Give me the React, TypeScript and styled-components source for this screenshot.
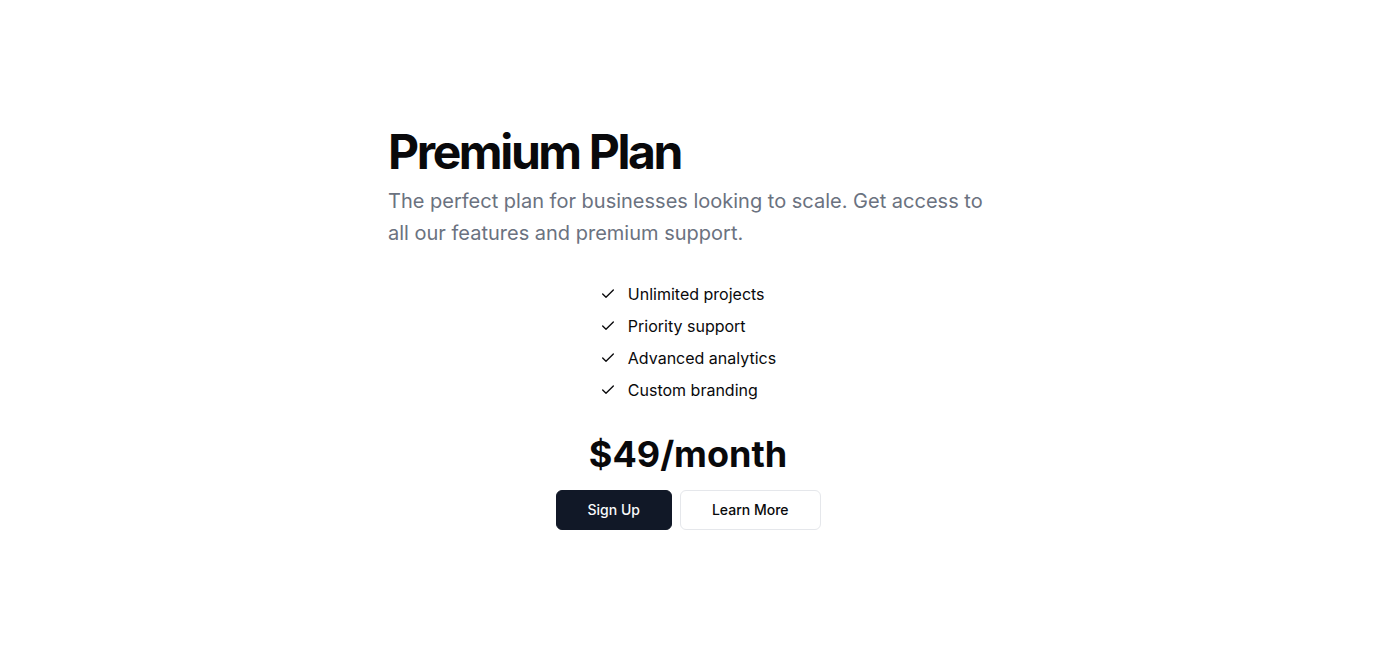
import React from "react";
import styled, { createGlobalStyle } from "styled-components";

const Global = createGlobalStyle`
  html, body { margin: 0; padding: 0; background: #ffffff; }
  body { font-family: Inter, "Noto Sans", sans-serif; color: #09090b; }
  * { box-sizing: border-box; }
`;

const Page = styled.main`
  min-height: 100vh;
  display: flex;
  align-items: center;
  justify-content: center;
`;

const Card = styled.section`
  width: 600px;
  display: flex;
  flex-direction: column;
`;

const Title = styled.h1`
  margin: 0;
  font-size: 48px;
  line-height: 48px;
  font-weight: 700;
  letter-spacing: -0.05em;
  color: #09090b;
`;

const Description = styled.p`
  margin: 9px 0 0;
  font-size: 20px;
  line-height: 32.5px;
  color: #6b7280;
`;

const Features = styled.ul`
  list-style: none;
  margin: 32px 0 0;
  padding: 0;
  align-self: center;
  display: flex;
  flex-direction: column;
  gap: 8px;
`;

const Feature = styled.li`
  display: flex;
  align-items: center;
  gap: 12px;
  font-size: 16px;
  line-height: 24px;
  white-space: nowrap;
  color: #09090b;
  svg { flex-shrink: 0; }
`;

const Price = styled.div`
  margin-top: 32px;
  text-align: center;
  font-size: 36px;
  line-height: 40px;
  font-weight: 700;
  color: #09090b;
`;

const Actions = styled.div`
  margin-top: 16px;
  display: flex;
  justify-content: center;
  gap: 8px;
`;

const Button = styled.button<{ $variant?: "primary" | "outline" }>`
  height: 40px;
  padding: 0 31px;
  border-radius: 6px;
  font-family: Inter, sans-serif;
  font-size: 14px;
  font-weight: 500;
  cursor: pointer;
  border: 1px solid ${(p) => (p.$variant === "outline" ? "#e5e7eb" : "#111827")};
  background: ${(p) => (p.$variant === "outline" ? "#ffffff" : "#111827")};
  color: ${(p) => (p.$variant === "outline" ? "#09090b" : "#f9fafb")};
`;

const Check = () => (
  <svg width="16" height="16" viewBox="0 0 24 24" fill="none" stroke="currentColor" strokeWidth="2" strokeLinecap="round" strokeLinejoin="round">
    <path d="M20 6 9 17l-5-5" />
  </svg>
);

const items = ["Unlimited projects", "Priority support", "Advanced analytics", "Custom branding"];

export default function App() {
  return (
    <>
      <Global />
      <Page>
        <Card>
          <Title>Premium Plan</Title>
          <Description>
            The perfect plan for businesses looking to scale. Get access to all our features and premium support.
          </Description>
          <Features>
            {items.map((t) => (
              <Feature key={t}>
                <Check />
                {t}
              </Feature>
            ))}
          </Features>
          <Price>$49/month</Price>
          <Actions>
            <Button>Sign Up</Button>
            <Button $variant="outline">Learn More</Button>
          </Actions>
        </Card>
      </Page>
    </>
  );
}
